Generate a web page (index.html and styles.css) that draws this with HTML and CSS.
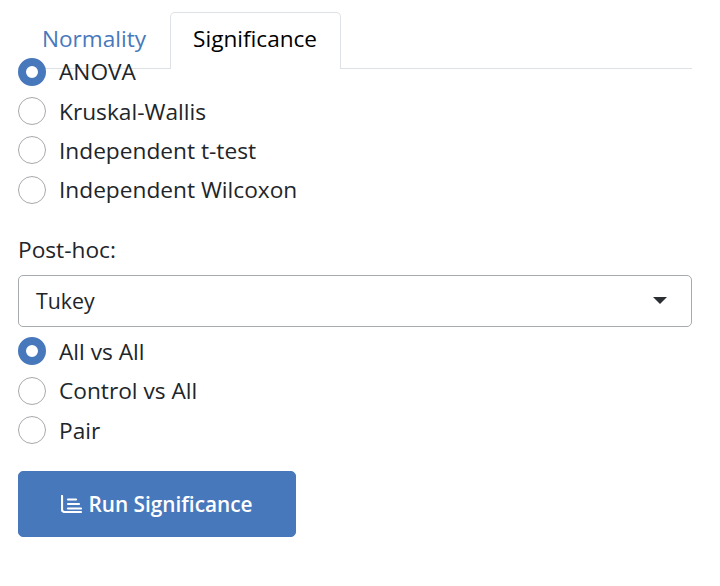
FILE: index.html
```html
<!DOCTYPE html>
<html lang="en">
<head>
  <meta charset="UTF-8" />
  <title>Significance</title>
  <link rel="stylesheet" href="styles.css">
</head>
<body>
  <div class="panel">
    <div class="tabs">
      <a class="tab">Normality</a>
      <a class="tab active">Significance</a>
    </div>

    <div class="radio-group test-group">
      <label class="radio"><span class="dot checked"></span>ANOVA</label>
      <label class="radio"><span class="dot"></span>Kruskal-Wallis</label>
      <label class="radio"><span class="dot"></span>Independent t-test</label>
      <label class="radio"><span class="dot"></span>Independent Wilcoxon</label>
    </div>

    <div class="field-label">Post-hoc:</div>
    <div class="select">
      <span>Tukey</span>
      <span class="caret"></span>
    </div>

    <div class="radio-group">
      <label class="radio"><span class="dot checked"></span>All vs All</label>
      <label class="radio"><span class="dot"></span>Control vs All</label>
      <label class="radio"><span class="dot"></span>Pair</label>
    </div>

    <button class="run-btn">
      <svg class="chart-icon" viewBox="0 0 21 18" width="21" height="18" fill="none" stroke="#fff" stroke-width="2.2" stroke-linecap="round">
        <path d="M1 1v13.500a2.500 2.500 0 0 0 2.500 2.500H20"/>
        <path d="M7 4.500h8"/>
        <path d="M7 9h11"/>
        <path d="M7 13.500h13"/>
      </svg>
      Run Significance
    </button>
  </div>
</body>
</html>
```

FILE: styles.css
```css
body {
  margin: 0;
  background: #fff;
  font-family: "Open Sans", sans-serif;
  font-size: 22.700px;
  color: #212529;
}

.panel {
  width: 674px;
  padding: 12px 0 0 18px;
}

.tabs {
  display: flex;
  height: 56px;
  border-bottom: 1px solid #dee2e6;
}

.tab {
  padding: 10px 24px 0;
  color: #4878bc;
  line-height: 34px;
  font-size: 22.600px;
}

.tab.active {
  height: 57px;
  box-sizing: border-box;
  padding: 9px 23px 0 22px;
  color: #000;
  background: #fff;
  border: 1px solid #dee2e6;
  border-bottom: none;
  border-radius: 5px 5px 0 0;
}

.radio-group {
  display: flex;
  flex-direction: column;
}

.test-group {
  margin-top: -17px;
}

.radio {
  display: flex;
  align-items: center;
  gap: 13px;
  height: 39.400px;
}

.dot {
  width: 28px;
  height: 28px;
  box-sizing: border-box;
  background: #fff;
  border: 1px solid #a6a9ac;
  border-radius: 50%;
}

.dot.checked {
  border: 8px solid #4878bc;
}

.field-label {
  margin-top: 23px;
  line-height: 34px;
}

.select {
  display: flex;
  justify-content: space-between;
  align-items: center;
  height: 52px;
  box-sizing: border-box;
  margin: 8px 0 5px;
  padding: 0 24px 0 17px;
  border: 1px solid #a6abb0;
  border-radius: 5px;
  font-size: 21.300px;
}

.caret {
  border-top: 7px solid #2b2f33;
  border-left: 7.500px solid transparent;
  border-right: 7.500px solid transparent;
}

.run-btn {
  display: flex;
  align-items: center;
  justify-content: center;
  gap: 6px;
  width: 278px;
  height: 66px;
  margin-top: 21px;
  padding: 0;
  background: #4878bc;
  border: 1px solid #4878bc;
  border-radius: 5px;
  color: #fff;
  font-family: inherit;
  font-size: 20.800px;
  font-weight: 600;
}
```
